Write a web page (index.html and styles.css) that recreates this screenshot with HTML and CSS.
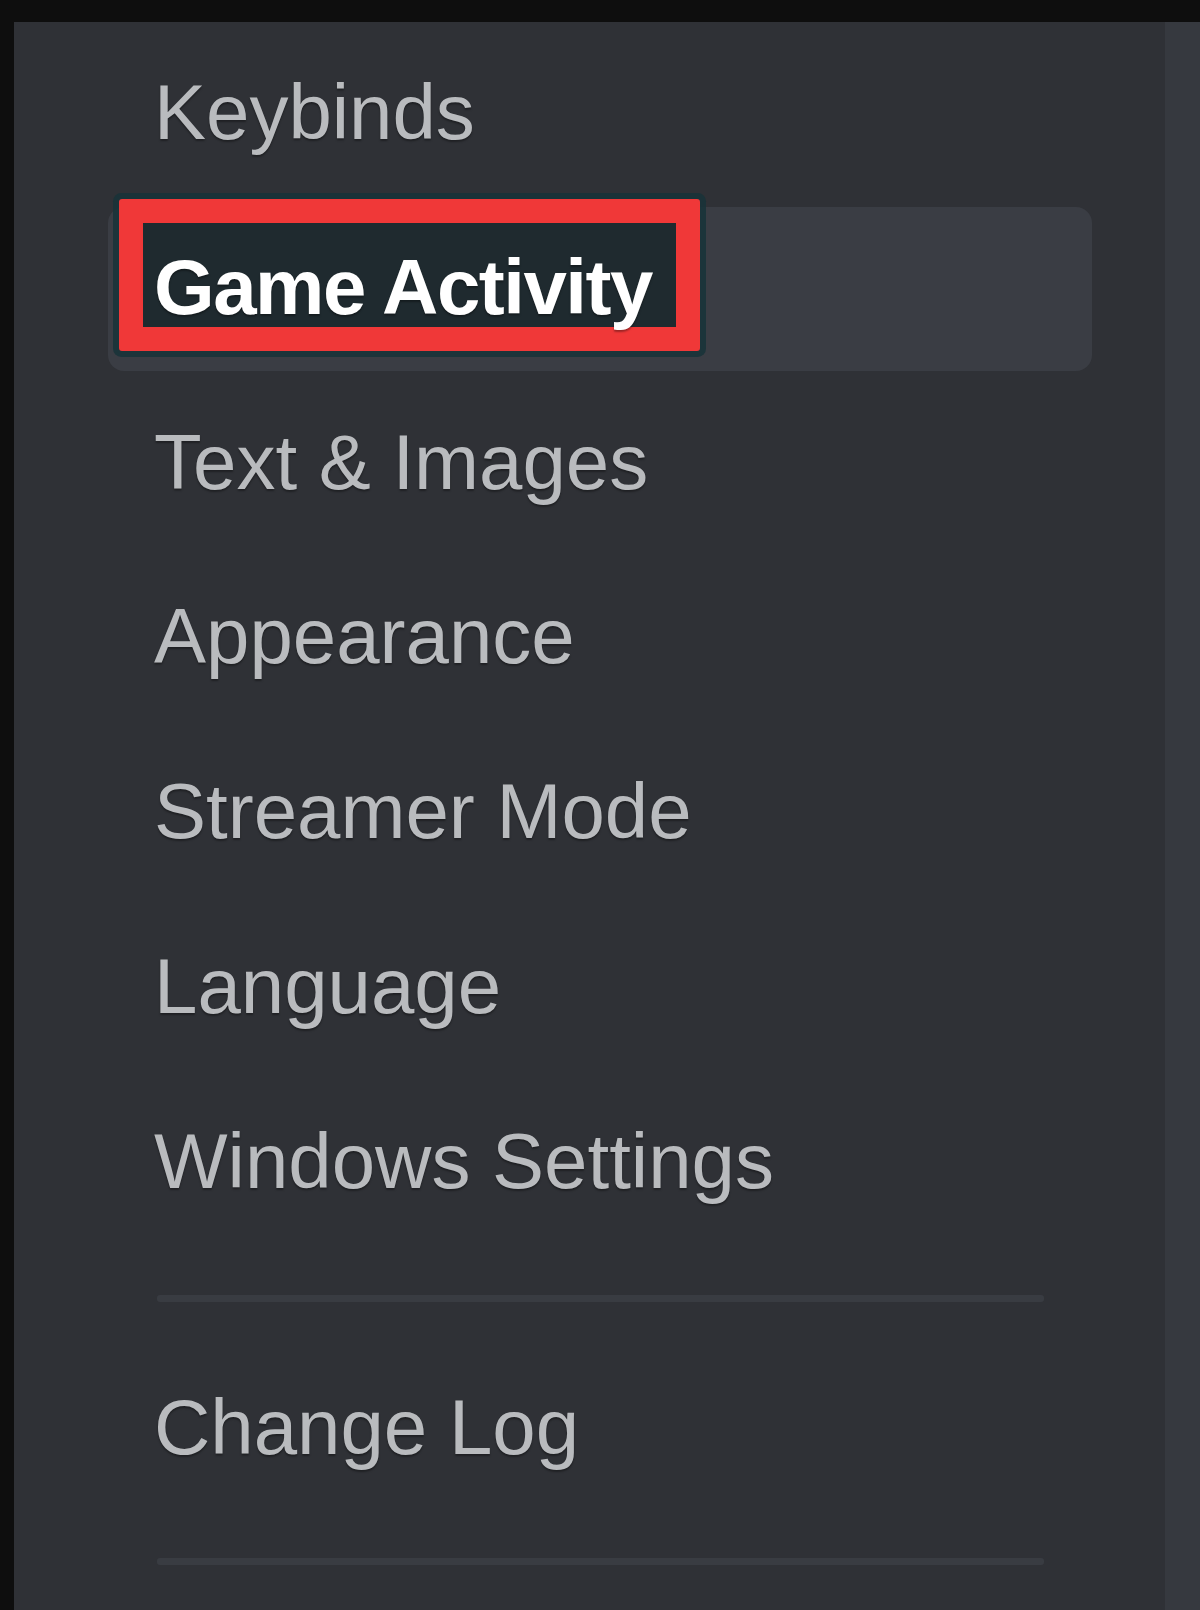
FILE: index.html
```html
<!DOCTYPE html>
<html lang="en">
<head>
    <meta charset="UTF-8">
    <meta name="viewport" content="width=device-width, initial-scale=1.0">
    <title>User Settings</title>
    <link rel="stylesheet" href="styles.css">
</head>
<body>
    <div class="frame">
        <nav class="sidebar">
            <div class="item">Keybinds</div>
            <div class="item selected">
                <div class="mark"></div>
                <span class="label">Game Activity</span>
            </div>
            <div class="item">Text &amp; Images</div>
            <div class="item">Appearance</div>
            <div class="item">Streamer Mode</div>
            <div class="item">Language</div>
            <div class="item">Windows Settings</div>
            <div class="sep"></div>
            <div class="item">Change Log</div>
            <div class="sep sep-last"></div>
        </nav>
        <div class="content"></div>
    </div>
</body>
</html>
```

FILE: styles.css
```css
body {
    margin: 0;
    background-color: #0e0e0e;
    font-family: "Liberation Sans", Arial, sans-serif;
}

.frame {
    display: flex;
    height: 1610px;
    padding: 22px 0 0 14px;
    box-sizing: border-box;
}

.sidebar {
    width: 1151px;
    background-color: #2f3136;
    padding: 10px 73px 0 94px;
    box-sizing: border-box;
    display: flex;
    flex-direction: column;
}

.content {
    flex: 1;
    background-color: #36393f;
}

.item {
    position: relative;
    height: 164px;
    line-height: 160px;
    margin-bottom: 11px;
    padding-left: 46px;
    font-size: 78px;
    color: #b9bbbe;
    border-radius: 16px;
    text-shadow: 0 2px 2px rgba(0, 0, 0, 0.35);
    white-space: nowrap;
}

.selected {
    background-color: #3a3d44;
    color: #ffffff;
    font-weight: 700;
    letter-spacing: -1.5px;
}

.label {
    position: relative;
}

.mark {
    position: absolute;
    left: 11px;
    top: -8px;
    width: 581px;
    height: 152px;
    box-sizing: border-box;
    border: 24px solid #f03838;
    border-radius: 3px;
    background-color: #1f2a2f;
    box-shadow: 0 0 0 6px rgba(24, 50, 56, 0.85);
}

.sep {
    height: 7px;
    margin: 40px 48px 45px 49px;
    background-color: #393c42;
    border-radius: 3px;
}

.sep-last {
    margin-top: 36px;
}
```
